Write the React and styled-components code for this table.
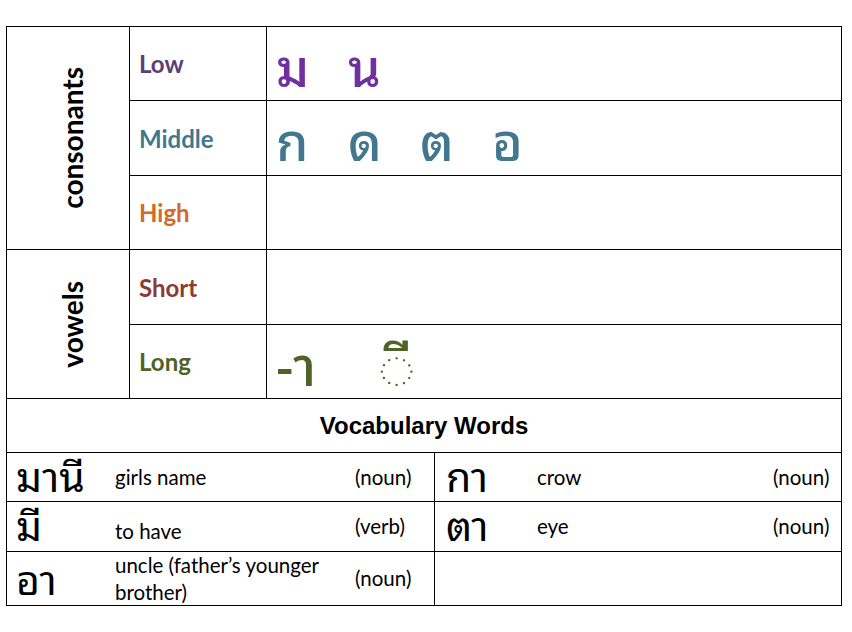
import styled, { createGlobalStyle } from "styled-components"

const GlobalStyle = createGlobalStyle`
  html, body {
    margin: 0;
    background: #ffffff;
    color: #000000;
    font-family: Lato, "Liberation Sans", sans-serif;
  }
`

const thai = `"Noto Sans Thai Looped", "Noto Serif Thai", Loma, Garuda, Norasi, "Tlwg Typist", Kinnari, "Noto Sans Thai", "DejaVu Sans", sans-serif`

const Page = styled.div`
  padding: 26px 0 0 6px;
`

const Sheet = styled.div`
  width: 835px;
  border-top: 1px solid #000;
  border-left: 1px solid #000;
`

const LetterGrid = styled.div`
  display: grid;
  grid-template-columns: 123px 137px 575px;
  grid-template-rows: 74px 75px 74px 75px 74px;
`

const Cell = styled.div`
  display: flex;
  align-items: center;
  border-right: 1px solid #000;
  border-bottom: 1px solid #000;
  min-width: 0;
`

const GroupCell = styled(Cell)`
  grid-row: span ${({ $span }) => $span};
  justify-content: center;
  padding-left: 8px;
`

const GroupLabel = styled.span`
  writing-mode: vertical-rl;
  transform: rotate(180deg);
  font-weight: 700;
  font-size: 28px;
  line-height: 1;
`

const LevelCell = styled(Cell)`
  padding-left: 9px;
  font-weight: 700;
  font-size: 24px;
  color: ${({ $color }) => $color};
`

const LettersCell = styled(Cell)`
  padding-left: 9px;
  color: ${({ $color }) => $color};
`

const Glyph = styled.span`
  width: ${({ $w }) => $w}px;
  font-family: ${thai};
  font-weight: 500;
  font-size: ${({ $size }) => $size}px;
  line-height: 1;
`

const VocabTitle = styled.div`
  height: 53px;
  display: flex;
  align-items: center;
  justify-content: center;
  border-right: 1px solid #000;
  border-bottom: 1px solid #000;
  font-family: "Liberation Sans", Arial, sans-serif;
  font-weight: 700;
  font-size: 24px;
`

const VocabGrid = styled.div`
  display: grid;
  grid-template-columns: 428px 407px;
  grid-template-rows: 49px 50px 54px;
`

const WordCell = styled.div`
  display: grid;
  grid-template-columns: ${({ $cols }) => $cols};
  padding-left: ${({ $pad }) => $pad}px;
  border-right: 1px solid #000;
  border-bottom: 1px solid #000;
  min-width: 0;
`

const ThaiWord = styled.span`
  align-self: ${({ $align }) => $align || "center"};
  margin-bottom: ${({ $align }) => ($align === "end" ? 8 : $align === "start" ? 0 : 8)}px;
  font-family: ${thai};
  font-weight: 400;
  font-size: 41px;
  line-height: 1;
`

const Meaning = styled.span`
  align-self: ${({ $align }) => $align || "center"};
  margin-bottom: ${({ $align }) => ($align === "end" ? 6 : 0)}px;
  padding-right: 16px;
  font-size: 20.5px;
  line-height: 1.3;
`

const Part = styled.span`
  font-size: 20.5px;
  line-height: 1.3;
  align-self: center;
`

const levels = [
  { name: "Low", color: "#5b3f7a", glyphColor: "#7030a0", letters: ["ม", "น"] },
  { name: "Middle", color: "#3f7891", glyphColor: "#41778f", letters: ["ก", "ด", "ต", "อ"] },
  { name: "High", color: "#d46b27", glyphColor: "#d46b27", letters: [] },
]

const vowels = [
  { name: "Short", color: "#8b3a34", letters: [] },
  { name: "Long", color: "#4f6228", letters: ["-า", "\u25CCี"] },
]

const left = "99px 240px 1fr"
const right = "91px 236px 1fr"

const words = [
  { side: "l", thai: "มานี", meaning: "girls name", part: "(noun)" },
  { side: "r", thai: "กา", meaning: "crow", part: "(noun)" },
  { side: "l", thai: "มี", meaning: "to have", part: "(verb)", thaiAlign: "start", meaningAlign: "end" },
  { side: "r", thai: "ตา", meaning: "eye", part: "(noun)" },
  { side: "l", thai: "อา", meaning: "uncle (father’s younger brother)", part: "(noun)", thaiAlign: "end" },
  { side: "r" },
]

function Row({ item, color, wide }) {
  return (
    <>
      <LevelCell $color={item.color}>{item.name}</LevelCell>
      <LettersCell $color={color}>
        {item.letters.map((g) => (
          <Glyph key={g} $w={wide ? 103 : 72} $size={wide ? 54 : 52}>
            {g}
          </Glyph>
        ))}
      </LettersCell>
    </>
  )
}

export default function App() {
  return (
    <>
      <GlobalStyle />
      <Page>
        <Sheet>
          <LetterGrid>
            <GroupCell $span={3}>
              <GroupLabel>consonants</GroupLabel>
            </GroupCell>
            {levels.map((l) => (
              <Row key={l.name} item={l} color={l.glyphColor} />
            ))}
            <GroupCell $span={2}>
              <GroupLabel>vowels</GroupLabel>
            </GroupCell>
            {vowels.map((v) => (
              <Row key={v.name} item={v} color={v.color} wide />
            ))}
          </LetterGrid>
          <VocabTitle>Vocabulary Words</VocabTitle>
          <VocabGrid>
            {words.map((w, i) => (
              <WordCell key={i} $cols={w.side === "l" ? left : right} $pad={w.side === "l" ? 9 : 11}>
                {w.thai && (
                  <>
                    <ThaiWord $align={w.thaiAlign}>{w.thai}</ThaiWord>
                    <Meaning $align={w.meaningAlign}>{w.meaning}</Meaning>
                    <Part>{w.part}</Part>
                  </>
                )}
              </WordCell>
            ))}
          </VocabGrid>
        </Sheet>
      </Page>
    </>
  )
}
